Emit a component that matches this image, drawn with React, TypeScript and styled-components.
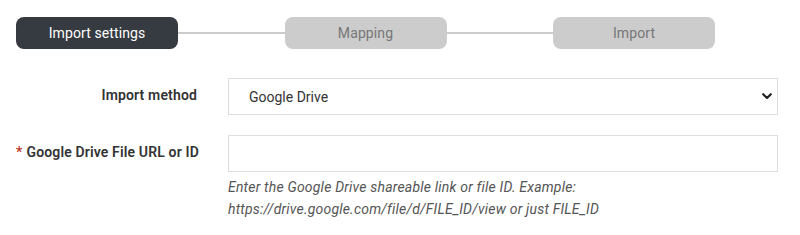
import React from "react";
import styled, { createGlobalStyle } from "styled-components";

const Global = createGlobalStyle`
  html, body { margin: 0; padding: 0; background: #fff; }
  body { font-family: Roboto, "Liberation Sans", Arial, sans-serif; color: #333; }
  * { box-sizing: border-box; }
`;

const Page = styled.div`
  padding: 17px 16px 0 16px;
`;

const Steps = styled.div`
  display: flex;
  align-items: center;
  width: 699px;
`;

const Step = styled.div<{ $active?: boolean }>`
  width: 162px;
  height: 32px;
  border-radius: 8px;
  display: flex;
  align-items: center;
  justify-content: center;
  font-size: 14px;
  letter-spacing: 0.1px;
  background: ${(p) => (p.$active ? "#363a41" : "#cccccc")};
  color: ${(p) => (p.$active ? "#ffffff" : "#777777")};
  flex: none;
`;

const Connector = styled.div`
  flex: 1;
  height: 2px;
  background: #cccccc;
`;

const Form = styled.div`
  margin-top: 29px;
  display: grid;
  grid-template-columns: 181px 550px;
  column-gap: 31px;
  row-gap: 20px;
`;

const Label = styled.label`
  text-align: right;
  font-size: 14px;
  font-weight: 600;
  letter-spacing: 0.15px;
  color: #333;
  padding-top: 9px;
  white-space: nowrap;
`;

const Req = styled.span`
  color: #c0392b;
  margin-right: 4px;
`;

const Field = styled.div`
  display: flex;
  flex-direction: column;
`;

const SelectWrap = styled.div`
  position: relative;
  height: 37px;
`;

const Select = styled.select`
  appearance: none;
  -webkit-appearance: none;
  width: 100%;
  height: 37px;
  border: 1px solid #dddddd;
  border-radius: 0;
  background: #fff;
  font-family: inherit;
  font-size: 14px;
  color: #333;
  padding: 0 30px 0 20px;
  outline: none;
`;

const Chevron = styled.svg`
  position: absolute;
  right: 6px;
  top: 15px;
  pointer-events: none;
`;

const Input = styled.input`
  width: 100%;
  height: 37px;
  border: 1px solid #dddddd;
  background: #fff;
  font-family: inherit;
  font-size: 14px;
  padding: 0 12px;
  outline: none;
`;

const Help = styled.div`
  margin-top: 4px;
  font-size: 14px;
  font-style: italic;
  letter-spacing: 0.2px;
  color: #555;
  line-height: 22px;
`;

export default function App() {
  return (
    <>
      <Global />
      <Page>
        <Steps>
          <Step $active>Import settings</Step>
          <Connector />
          <Step>Mapping</Step>
          <Connector />
          <Step>Import</Step>
        </Steps>
        <Form>
          <Label>Import method</Label>
          <Field>
            <SelectWrap>
              <Select defaultValue="gd">
                <option value="gd">Google Drive</option>
              </Select>
              <Chevron width="10" height="7" viewBox="0 0 10 7">
                <path d="M1.2 1.2 L5 5 L8.8 1.2" fill="none" stroke="#222" strokeWidth="2.2" strokeLinecap="round" strokeLinejoin="round" />
              </Chevron>
            </SelectWrap>
          </Field>
          <Label>
            <Req>*</Req>Google Drive File URL or ID
          </Label>
          <Field>
            <Input type="text" />
            <Help>
              Enter the Google Drive shareable link or file ID. Example:
              <br />
              https://drive.google.com/file/d/FILE_ID/view or just FILE_ID
            </Help>
          </Field>
        </Form>
      </Page>
    </>
  );
}
